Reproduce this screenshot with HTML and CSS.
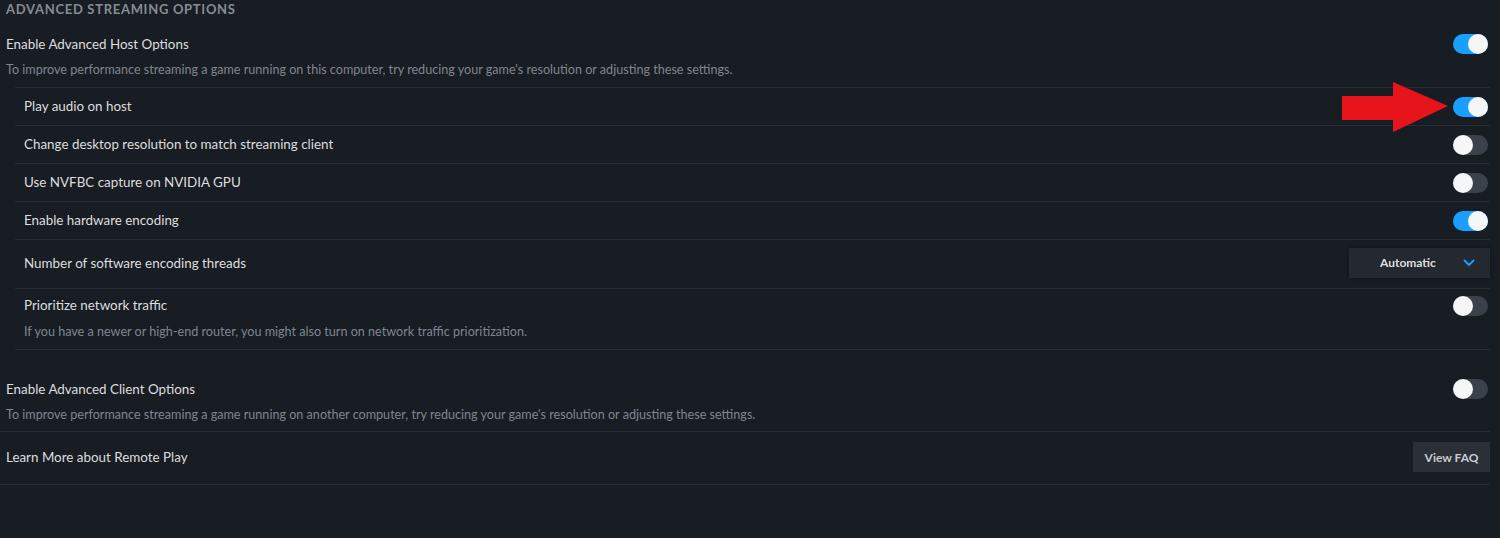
FILE: index.html
```html
<!DOCTYPE html>
<html>
<head>
<meta charset="utf-8">
<link rel="stylesheet" href="styles.css">
</head>
<body>
<div class="page">
  <div class="heading">Advanced Streaming Options</div>

  <section class="section host">
    <div class="line">
      <span class="title">Enable Advanced Host Options</span>
      <span class="toggle on"></span>
    </div>
    <div class="desc">To improve performance streaming a game running on this computer, try reducing your game's resolution or adjusting these settings.</div>
  </section>

  <div class="sublist">
    <div class="row">
      <span class="label">Play audio on host</span>
      <span class="toggle on"></span>
    </div>
    <div class="row">
      <span class="label">Change desktop resolution to match streaming client</span>
      <span class="toggle"></span>
    </div>
    <div class="row">
      <span class="label">Use NVFBC capture on NVIDIA GPU</span>
      <span class="toggle"></span>
    </div>
    <div class="row">
      <span class="label">Enable hardware encoding</span>
      <span class="toggle on"></span>
    </div>
    <div class="row tall">
      <span class="label">Number of software encoding threads</span>
      <div class="dropdown">
        <span class="dd-text">Automatic</span>
        <svg class="chev" width="12" height="8" viewBox="0 0 12 8"><path d="M1.5 1.5 L6 6 L10.5 1.5" fill="none" stroke="#1a9fff" stroke-width="1.8" stroke-linecap="round" stroke-linejoin="round"/></svg>
      </div>
    </div>
    <div class="row multi">
      <div class="line">
        <span class="label">Prioritize network traffic</span>
        <span class="toggle"></span>
      </div>
      <div class="desc">If you have a newer or high-end router, you might also turn on network traffic prioritization.</div>
    </div>
  </div>

  <section class="section client">
    <div class="line">
      <span class="title">Enable Advanced Client Options</span>
      <span class="toggle"></span>
    </div>
    <div class="desc">To improve performance streaming a game running on another computer, try reducing your game's resolution or adjusting these settings.</div>
  </section>

  <div class="learn">
    <span class="title">Learn More about Remote Play</span>
    <button class="btn">View FAQ</button>
  </div>

  <svg class="arrow" width="110" height="54" viewBox="0 0 110 54">
    <polygon points="2,16 53,16 53,2 108,26 53,52 53,40 2,40" fill="#e8141c"/>
  </svg>
</div>
</body>
</html>
```

FILE: styles.css
```css
html, body {
  margin: 0;
  padding: 0;
  background: #181c23;
}

body {
  font-family: "Lato", "Liberation Sans", sans-serif;
  color: #dcdedf;
  width: 1500px;
  height: 538px;
  overflow: hidden;
}

.page {
  position: relative;
  width: 1490px;
}

.heading {
  height: 20px;
  line-height: 19px;
  padding-left: 6px;
  font-size: 13px;
  font-weight: 700;
  letter-spacing: 0.7px;
  text-transform: uppercase;
  color: #868c94;
}

.section {
  padding: 14px 0 9px 6px;
}

.client {
  margin-top: 15px;
  border-bottom: 1px solid #272c34;
  padding-bottom: 8px;
}

.line {
  display: flex;
  align-items: center;
  justify-content: space-between;
  height: 20px;
  line-height: 18px;
}

.title {
  font-size: 13.4px;
  color: #dcdedf;
}

.desc {
  margin-top: 8px;
  height: 16px;
  line-height: 15px;
  font-size: 12.6px;
  color: #7f868f;
}

.sublist {
  margin-left: 15px;
}

.row {
  display: flex;
  align-items: center;
  justify-content: space-between;
  height: 37px;
  line-height: 18px;
  border-top: 1px solid #272c34;
  padding-left: 9px;
}

.row .label {
  margin-top: -2px;
}

.row.tall {
  height: 48px;
}

.row.multi {
  display: block;
  height: auto;
  padding-top: 7px;
  padding-bottom: 9px;
  border-bottom: 1px solid #272c34;
}

.row.multi .label {
  margin-top: -3px;
}

.label {
  font-size: 13.4px;
  color: #dcdedf;
}

.toggle {
  position: relative;
  display: inline-block;
  width: 35px;
  height: 20px;
  border-radius: 10px;
  background: #3b414b;
  margin-right: 2px;
  flex: none;
}

.toggle::after {
  content: "";
  position: absolute;
  left: 0;
  top: 0;
  width: 20px;
  height: 20px;
  border-radius: 50%;
  background: #f4f6f8;
}

.toggle.on {
  background: #1a9fff;
}

.toggle.on::after {
  left: auto;
  right: 0;
}

.dropdown {
  display: flex;
  align-items: center;
  width: 141px;
  height: 30px;
  box-sizing: border-box;
  background: #232831;
  box-shadow: 0 0 4px rgba(0, 0, 0, 0.35);
  padding-left: 31px;
  margin-top: -2px;
}

.dd-text {
  font-size: 12px;
  font-weight: 700;
  color: #dcdedf;
  width: 56px;
}

.chev {
  margin-left: 27px;
}

.learn {
  display: flex;
  align-items: center;
  justify-content: space-between;
  height: 52px;
  padding-left: 6px;
  border-bottom: 1px solid #272c34;
}

.learn .title {
  margin-top: -2px;
}

.btn {
  width: 77px;
  height: 30px;
  border: none;
  background: #2a2f38;
  color: #c8ccd2;
  font-family: "Lato", "Liberation Sans", sans-serif;
  font-size: 12px;
  font-weight: 700;
  padding: 0;
  margin-top: -2px;
}

.arrow {
  position: absolute;
  left: 1340px;
  top: 80px;
}
```
